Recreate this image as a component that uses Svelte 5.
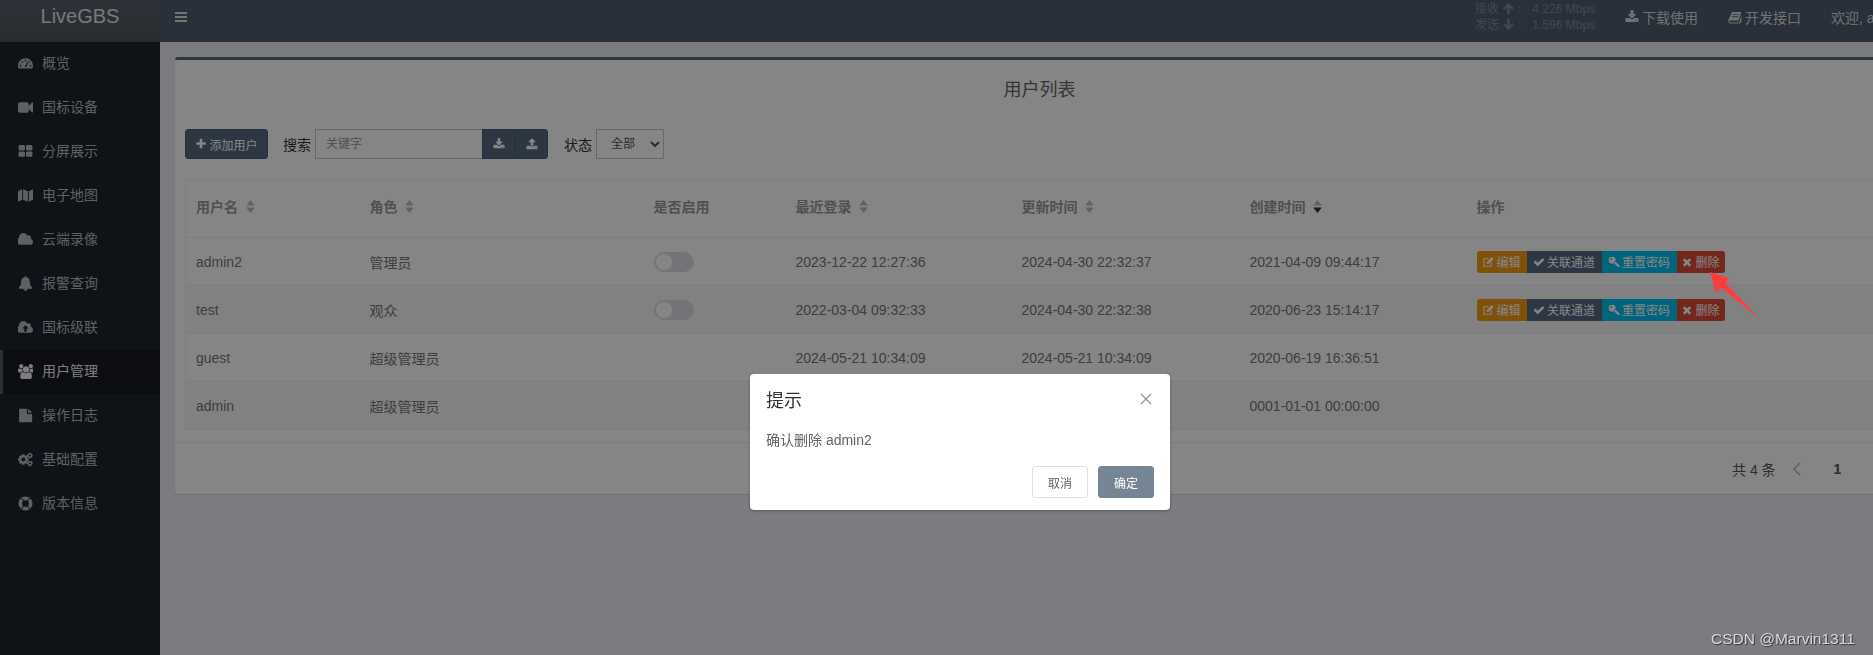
<script>
  const circle = (x, y, r) => `M${x - r} ${y}a${r} ${r} 0 1 0 ${2 * r} 0a${r} ${r} 0 1 0 ${-2 * r} 0Z`;

  // gear outline with a round hole, used for the settings icon
  function gear(cx, cy, r, teeth = 8) {
    const pts = [];
    const step = (Math.PI * 2) / teeth;
    for (let i = 0; i < teeth; i++) {
      const a = i * step;
      [[-0.32, 0.76], [-0.2, 1], [0.2, 1], [0.32, 0.76]].forEach(([o, k]) => {
        pts.push(`${(cx + Math.cos(a + o * step * 1.4) * r * k).toFixed(0)} ${(cy + Math.sin(a + o * step * 1.4) * r * k).toFixed(0)}`);
      });
    }
    return 'M' + pts.join('L') + 'Z' + circle(cx, cy, r * 0.36);
  }

  const cloud = 'M1792 1152q0 159-112.500 271.500t-271.500 112.500h-1088q-185 0-316.500-131.500t-131.500-316.500q0-132 71-241.500t187-163.500q-2-28-2-43 0-212 150-362t362-150q158 0 286.500 88t187.500 230q70-62 166-62 106 0 181 75t75 181q0 75-41 138 129 30 213 134.500t84 239.500z';

  const icons = {
    dashboard: 'M896 256C400 256 0 656 0 1152c0 138 30 248 90 348H1702c60-100 90-210 90-348C1792 656 1392 256 896 256Z' + circle(300, 1150, 100) + circle(480, 720, 100) + circle(896, 540, 100) + circle(1312, 720, 100) + circle(1492, 1150, 100) + 'M800 1300L1120 720 1200 760 1000 1300Z',
    video: 'M1792 352v1088q0 42-39 59-13 5-25 5-27 0-45-19l-403-403v166q0 119-84.500 203.500t-203.500 84.500h-704q-119 0-203.500-84.500t-84.500-203.500v-704q0-119 84.500-203.500t203.500-84.500h704q119 0 203.500 84.500t84.500 203.500v165l403-402q18-19 45-19 12 0 25 5 39 17 39 59z',
    grid: 'M832 1024v384q0 52-38 90t-90 38h-512q-52 0-90-38t-38-90v-384q0-52 38-90t90-38h512q52 0 90 38t38 90zm0-768v384q0 52-38 90t-90 38h-512q-52 0-90-38t-38-90v-384q0-52 38-90t90-38h512q52 0 90 38t38 90zm896 768v384q0 52-38 90t-90 38h-512q-52 0-90-38t-38-90v-384q0-52 38-90t90-38h512q52 0 90 38t38 90zm0-768v384q0 52-38 90t-90 38h-512q-52 0-90-38t-38-90v-384q0-52 38-90t90-38h512q52 0 90 38t38 90z',
    map: 'M0 380L500 150V1400L0 1640ZM610 150L1180 390V1640L610 1400ZM1290 390L1792 150V1400L1290 1640Z',
    cloud,
    bell: 'M912 1696q0-16-16-16-59 0-101.500-42.500t-42.500-101.500q0-16-16-16t-16 16q0 73 51.500 124.500t124.500 51.500q16 0 16-16zm816-288q0 52-38 90t-90 38h-448q0 106-75 181t-181 75-181-75-75-181h-448q-52 0-90-38t-38-90q50-42 91-88t85-119.500 74.500-158.500 50-206 19.500-260q0-152 117-282.500t307-158.500q-8-19-8-39 0-40 28-68t68-28 68 28 28 68q0 20-8 39 190 28 307 158.500t117 282.500q0 139 19.500 260t50 206 74.500 158.500 85 119.500 91 88z',
    cloudup: cloud + 'M896 640L1270 1010H1040V1400H752V1010H522Z',
    users: 'M593 896q-162 5-265 128h-134q-82 0-138-40.500t-56-118.500q0-353 124-353 6 0 43.500 21t97.500 42.500 119 21.500q67 0 133-23-5 37-5 66 0 139 81 256zm1071 637q0 120-73 189.500t-194 69.500h-874q-121 0-194-69.500t-73-189.500q0-53 3.500-103.500t14-109 26.500-108.500 43-97.500 62-81 85.500-53.500 111.500-20q10 0 43 21.500t73 48 107 48 135 21.500 135-21.500 107-48 73-48 43-21.500q61 0 111.500 20t85.500 53.500 62 81 43 97.500 26.500 108.500 14 109 3.500 103.500zm-1024-1277q0 106-75 181t-181 75-181-75-75-181 75-181 181-75 181 75 75 181zm704 384q0 159-112.500 271.500t-271.500 112.500-271.500-112.500-112.500-271.500 112.500-271.500 271.500-112.500 271.500 112.500 112.500 271.500zm576 225q0 78-56 118.500t-138 40.500h-134q-103-123-265-128 81-117 81-256 0-29-5-66 66 23 133 23 59 0 119-21.500t97.500-42.500 43.500-21q124 0 124 353zm-128-609q0 106-75 181t-181 75-181-75-75-181 75-181 181-75 181 75 75 181z',
    file: 'M1200 560V100q22 14 36 28l430 404q14 14 28 28zM1072 100V620q0 40 28 68t68 28h526V1620q0 40-28 68t-68 28H228q-40 0-68-28t-28-68V196q0-40 28-68t68-28Z',
    cogs: gear(640, 900, 640, 8) + gear(1430, 430, 340, 8) + gear(1430, 1370, 340, 8),
    ring: circle(896, 896, 840) + circle(896, 896, 400) + 'M300 230L390 150 700 540 620 610ZM1492 230L1402 150 1092 540 1172 610ZM300 1562L390 1642 700 1252 620 1182ZM1492 1562L1402 1642 1092 1252 1172 1182Z',
    plus: 'M1600 736v192q0 40-28 68t-68 28h-416v416q0 40-28 68t-68 28h-192q-40 0-68-28t-28-68v-416h-416q-40 0-68-28t-28-68v-192q0-40 28-68t68-28h416v-416q0-40 28-68t68-28h192q40 0 68 28t28 68v416h416q40 0 68 28t28 68z',
    download: 'M1344 1344q0-26-19-45t-45-19-45 19-19 45 19 45 45 19 45-19 19-45zm256 0q0-26-19-45t-45-19-45 19-19 45 19 45 45 19 45-19 19-45zm128-224v320q0 40-28 68t-68 28h-1472q-40 0-68-28t-28-68v-320q0-40 28-68t68-28h465l135 136q58 56 136 56t136-56l136-136h464q40 0 68 28t28 68zm-325-569q17 41-14 70l-448 448q-18 19-45 19t-45-19l-448-448q-31-29-14-70 17-39 59-39h256v-448q0-26 19-45t45-19h256q26 0 45 19t19 45v448h256q42 0 59 39z',
    upload: 'M1344 1472q0-26-19-45t-45-19-45 19-19 45 19 45 45 19 45-19 19-45zm256 0q0-26-19-45t-45-19-45 19-19 45 19 45 45 19 45-19 19-45zm128-224v320q0 40-28 68t-68 28h-1472q-40 0-68-28t-28-68v-320q0-40 28-68t68-28h427q21 56 70.500 92t110.500 36h256q61 0 110.500-36t70.500-92h427q40 0 68 28t28 68zm-325-648q-17 40-59 40h-256v448q0 26-19 45t-45 19h-256q-26 0-45-19t-19-45v-448h-256q-42 0-59-40-17-39 14-69l448-448q18-19 45-19t45 19l448 448q31 30 14 69z',
    book: 'M520 240H1700L1340 1330H300Q170 1330 170 1460T300 1600H1440L1720 640V1520L1500 1720H300Q60 1720 40 1460 30 1300 130 1130ZM640 500L600 620H1360L1400 500ZM540 800L500 920H1260L1300 800Z',
    edit: 'M200 340H1040L880 500H360V1440H1300V1010L1460 850V1600H200ZM1440 160L1720 440 1020 1140 660 1220 740 860Z',
    check: 'M1671 566q0 40-28 68l-724 724-136 136q-28 28-68 28t-68-28l-136-136-362-362q-28-28-28-68t28-68l136-136q28-28 68-28t68 28l294 295 656-657q28-28 68-28t68 28l136 136q28 28 28 68z',
    key: circle(620, 620, 520) + circle(480, 480, 140) + 'M900 900L1050 760 1720 1430V1650H1420V1480H1250V1310H1080Z',
    times: 'M1490 1322q0 40-28 68l-136 136q-28 28-68 28t-68-28l-294-294-294 294q-28 28-68 28t-68-28l-136-136q-28-28-28-68t28-68l294-294-294-294q-28-28-28-68t28-68l136-136q28-28 68-28t68 28l294 294 294-294q28-28 68-28t68 28l136 136q28 28 28 68t-28 68l-294 294 294 294q28 28 28 68z',
    up: 'M896 120L1640 860 1400 1080 1080 760V1680H712V760L392 1080 152 860Z',
    down: 'M896 1680L1640 940 1400 720 1080 1040V120H712V1040L392 720 152 940Z'
  };

  const menu = [
    ['dashboard', '概览'],
    ['video', '国标设备'],
    ['grid', '分屏展示'],
    ['map', '电子地图'],
    ['cloud', '云端录像'],
    ['bell', '报警查询'],
    ['cloudup', '国标级联'],
    ['users', '用户管理', true],
    ['file', '操作日志'],
    ['cogs', '基础配置'],
    ['ring', '版本信息']
  ];

  const columns = [
    { label: '用户名', sort: true },
    { label: '角色', sort: true },
    { label: '是否启用' },
    { label: '最近登录', sort: true },
    { label: '更新时间', sort: true },
    { label: '创建时间', sort: true, desc: true },
    { label: '操作' }
  ];

  const users = [
    { name: 'admin2', role: '管理员', login: '2023-12-22 12:27:36', updated: '2024-04-30 22:32:37', created: '2021-04-09 09:44:17', editable: true },
    { name: 'test', role: '观众', login: '2022-03-04 09:32:33', updated: '2024-04-30 22:32:38', created: '2020-06-23 15:14:17', editable: true },
    { name: 'guest', role: '超级管理员', login: '2024-05-21 10:34:09', updated: '2024-05-21 10:34:09', created: '2020-06-19 16:36:51' },
    { name: 'admin', role: '超级管理员', login: '', updated: '', created: '0001-01-01 00:00:00' }
  ];

  const actions = [
    ['edit', '编辑', 'orange'],
    ['check', '关联通道', 'dark'],
    ['key', '重置密码', 'blue'],
    ['times', '删除', 'red']
  ];
</script>

{#snippet icon(name, cls = '')}
  <svg class="icon {cls}" viewBox="0 0 1792 1792" aria-hidden="true"><path fill-rule="evenodd" d={icons[name]} /></svg>
{/snippet}

<div class="page">
  <aside class="sidebar">
    <div class="logo">LiveGBS</div>
    <nav>
      {#each menu as [ic, label, active]}
        <div class="nav-item" class:active>
          {@render icon(ic)}
          <span>{label}</span>
        </div>
      {/each}
    </nav>
  </aside>

  <div class="main">
    <header class="topbar">
      <svg class="burger" viewBox="0 0 14 12" aria-hidden="true"><path d="M1 1h12v2H1zM1 5h12v2H1zM1 9h12v2H1z" /></svg>
      <div class="stats">
        <div>接收 {@render icon('up')} : <b>4.226 Mbps</b></div>
        <div>发送 {@render icon('down')} : <b>1.596 Mbps</b></div>
      </div>
      <div class="link">{@render icon('download')}下载使用</div>
      <div class="link">{@render icon('book')}开发接口</div>
      <div class="link welcome">欢迎, admin</div>
    </header>

    <section class="content">
      <div class="card">
        <h3>用户列表</h3>
        <div class="toolbar">
          <button class="btn add">{@render icon('plus')}添加用户</button>
          <label for="kw">搜索</label>
          <div class="search">
            <input id="kw" placeholder="关键字" />
            <button class="btn square">{@render icon('download')}</button>
            <button class="btn square">{@render icon('upload')}</button>
          </div>
          <label for="state">状态</label>
          <select id="state"><option>全部</option></select>
        </div>

        <table>
          <colgroup>
            <col style="width:174px" /><col style="width:284px" /><col style="width:142px" /><col style="width:226px" /><col style="width:228px" /><col style="width:227px" /><col />
          </colgroup>
          <thead>
            <tr>
              {#each columns as col}
                <th>
                  {col.label}
                  {#if col.sort}
                    <svg class="sort" class:desc={col.desc} viewBox="0 0 10 14" aria-hidden="true"><path class="top" d="M5 1l4 5H1z" /><path class="bot" d="M5 13l4-5H1z" /></svg>
                  {/if}
                </th>
              {/each}
            </tr>
          </thead>
          <tbody>
            {#each users as u}
              <tr>
                <td>{u.name}</td>
                <td>{u.role}</td>
                <td>{#if u.editable}<span class="switch"><i></i></span>{/if}</td>
                <td>{u.login}</td>
                <td>{u.updated}</td>
                <td>{u.created}</td>
                <td>
                  {#if u.editable}
                    <div class="actions">
                      {#each actions as [ic, label, color]}
                        <button class="act {color}">{@render icon(ic)}{label}</button>
                      {/each}
                    </div>
                  {/if}
                </td>
              </tr>
            {/each}
          </tbody>
        </table>

        <footer class="pager">
          <span class="total">共 4 条</span>
          <svg class="chev" viewBox="0 0 10 14" aria-hidden="true"><path d="M8 1L2 7l6 6" /></svg>
          <b>1</b>
          <svg class="chev" viewBox="0 0 10 14" aria-hidden="true"><path d="M2 1l6 6-6 6" /></svg>
        </footer>
      </div>
    </section>
  </div>
</div>

<div class="overlay"></div>

<svg class="arrow" viewBox="0 0 60 60" aria-hidden="true"><path d="M2 2L21 8 17.500 13 52 49 13.500 18 8 23Z" /></svg>

<div class="modal" role="dialog">
  <div class="modal-head">
    <span>提示</span>
    <svg viewBox="0 0 12 12" aria-hidden="true"><path d="M1 1l10 10M11 1L1 11" /></svg>
  </div>
  <div class="modal-body">确认删除 admin2</div>
  <div class="modal-foot">
    <button class="m-btn">取消</button>
    <button class="m-btn ok">确定</button>
  </div>
</div>

<div class="mark">CSDN @Marvin1311</div>

<style>
  :global(body) {
    margin: 0;
    overflow: hidden;
    background: #ebedf3;
    font-family: "Liberation Sans", "Noto Sans CJK SC", sans-serif;
    font-size: 14px;
  }

  .page {
    display: flex;
    width: 1920px;
    height: 655px;
    overflow: hidden;
  }

  .icon {
    width: 14px;
    height: 14px;
    fill: currentColor;
    flex: none;
  }

  /* sidebar */
  .sidebar {
    width: 160px;
    flex: none;
    background: #1d232c;
    color: #b4b9be;
  }

  .logo {
    height: 42px;
    padding-bottom: 10px;
    box-sizing: border-box;
    display: flex;
    align-items: center;
    justify-content: center;
    background: linear-gradient(#59606c, #4b555e);
    color: #e4e6e8;
    font-size: 20px;
  }

  .nav-item {
    height: 44px;
    display: flex;
    align-items: center;
    gap: 9px;
    padding: 0 0 4px 18px;
    box-sizing: border-box;
  }

  .nav-item.active {
    background: #181c22;
    border-left: 3px solid #565c64;
    padding-left: 15px;
    color: #f0f0f0;
  }

  .nav-item .icon {
    width: 15px;
    height: 15px;
    margin-top: 2px;
  }

  /* top bar */
  .main {
    flex: 1;
    min-width: 0;
  }

  .topbar {
    height: 42px;
    display: flex;
    align-items: center;
    padding-bottom: 9px;
    box-sizing: border-box;
    background: #4f5c6e;
    color: #d8dade;
  }

  .burger {
    width: 14px;
    height: 12px;
    margin: 0 0 0 14px;
    fill: #e0e0e0;
  }

  .stats {
    margin-left: auto;
    margin-right: 30px;
    font-size: 12px;
    line-height: 16px;
    color: #7f8a98;
  }

  .stats div {
    display: flex;
    align-items: center;
    gap: 3px;
  }

  .stats b {
    font-weight: normal;
    margin-left: auto;
    padding-left: 8px;
  }

  .stats .icon {
    width: 13px;
    height: 13px;
  }

  .link {
    display: flex;
    align-items: center;
    gap: 3px;
    margin-right: 30px;
  }

  .link.welcome {
    margin-right: 15px;
  }

  /* card */
  .content {
    padding: 15px 16px 15px 15px;
  }

  .card {
    background: #fff;
    border-top: 3px solid #5d6879;
    border-radius: 3px;
    box-shadow: 0 1px 1px rgba(0, 0, 0, 0.1);
    height: 437px;
    box-sizing: border-box;
  }

  h3 {
    margin: 0;
    height: 60px;
    line-height: 60px;
    text-align: center;
    font-size: 18px;
    font-weight: normal;
    color: #666;
  }

  .toolbar {
    display: flex;
    align-items: center;
    height: 30px;
    margin: 9px 0 20px 10px;
    color: #333;
  }

  .btn {
    height: 30px;
    border: 1px solid #4e6074;
    border-radius: 3px;
    background: #566a80;
    color: #fff;
    font: inherit;
    font-size: 12px;
    display: flex;
    align-items: center;
    justify-content: center;
    padding: 0;
  }

  .add {
    width: 83px;
    gap: 2px;
    margin-right: 15px;
  }

  .add .icon {
    width: 12px;
    height: 12px;
  }

  .square {
    width: 33px;
    border-radius: 0;
  }

  .square .icon {
    width: 12px;
    height: 12px;
  }

  .square:last-child {
    border-radius: 0 3px 3px 0;
  }

  label {
    margin-right: 4px;
  }

  .search {
    display: flex;
    margin-right: 16px;
  }

  input {
    width: 167px;
    height: 30px;
    box-sizing: border-box;
    border: 1px solid #ccc;
    border-right: 0;
    padding: 0 10px;
    font: inherit;
    font-size: 12px;
    outline: none;
  }

  input::placeholder {
    color: #999;
  }

  select {
    width: 68px;
    height: 30px;
    padding-left: 10px;
    border: 1px solid #ccc;
    background: #fff;
    font: inherit;
    font-size: 12px;
    color: #555;
  }

  /* table */
  table {
    width: 1710px;
    margin-left: 10px;
    border-collapse: collapse;
    table-layout: fixed;
    border: 1px solid #f0f0f0;
    color: #777;
  }

  th {
    height: 58px;
    padding: 0 10px 5px;
    text-align: left;
    font-size: 14px;
    font-weight: bold;
    color: #999;
    box-sizing: border-box;
    border-bottom: 1px solid #f0f0f0;
  }

  td {
    height: 48px;
    padding: 0 10px;
    box-sizing: border-box;
    border-bottom: 1px solid #f0f0f0;
  }

  tbody tr:nth-child(even) {
    background: #f7f7f7;
  }

  .sort {
    width: 11px;
    height: 15px;
    margin-left: 3px;
    vertical-align: -2px;
    fill: #bbb;
  }

  .sort.desc .bot {
    fill: #333;
  }

  .switch {
    display: block;
    width: 40px;
    height: 20px;
    border-radius: 10px;
    background: #dcdfe6;
    position: relative;
  }

  .switch i {
    position: absolute;
    left: 2px;
    top: 2px;
    width: 16px;
    height: 16px;
    border-radius: 50%;
    background: #fff;
  }

  .actions {
    display: flex;
    height: 22px;
  }

  .act {
    height: 22px;
    border: 1px solid transparent;
    padding: 0;
    color: #fff;
    font: inherit;
    font-size: 12px;
    display: flex;
    align-items: center;
    justify-content: center;
    gap: 2px;
    width: 75px;
    box-sizing: border-box;
  }

  .act .icon {
    width: 12px;
    height: 12px;
  }

  .orange {
    width: 50px;
    background: #f39c12;
    border-radius: 3px 0 0 3px;
  }

  .dark {
    background: #566a80;
  }

  .blue {
    background: #00c0ef;
  }

  .red {
    width: 48px;
    background: #dd4b39;
    border-radius: 0 3px 3px 0;
  }

  .pager {
    display: flex;
    align-items: center;
    margin-top: 12px;
    height: 52px;
    border-top: 1px solid #f0f0f0;
    box-sizing: border-box;
    color: #555;
  }

  .total {
    margin-left: 1557px;
    font-size: 14px;
    white-space: nowrap;
  }

  .chev {
    width: 10px;
    height: 14px;
    margin-left: 16px;
    fill: none;
    stroke: #bbb;
    stroke-width: 1.6;
  }

  .pager b {
    margin-left: 32px;
    margin-right: 30px;
  }

  /* dialog on top */
  .overlay {
    position: fixed;
    inset: 0;
    background: rgba(0, 0, 0, 0.48);
  }

  .arrow {
    position: fixed;
    left: 1708px;
    top: 270px;
    width: 60px;
    height: 60px;
    fill: #ff3d3d;
  }

  .modal {
    position: fixed;
    left: 750px;
    top: 374px;
    width: 420px;
    height: 136px;
    background: #fff;
    border-radius: 4px;
    box-shadow: 0 1px 3px rgba(0, 0, 0, 0.3);
  }

  .modal-head {
    display: flex;
    align-items: center;
    justify-content: space-between;
    padding: 12px 18px 0 16px;
    height: 26px;
    font-size: 18px;
    color: #303133;
  }

  .modal-head svg {
    width: 12px;
    height: 12px;
    fill: none;
    stroke: #909399;
    stroke-width: 1.2;
  }

  .modal-body {
    padding: 18px 16px 0;
    line-height: 20px;
    color: #606266;
  }

  .modal-foot {
    display: flex;
    justify-content: flex-end;
    gap: 10px;
    padding: 16px 16px 0;
  }

  .m-btn {
    width: 56px;
    height: 32px;
    border: 1px solid #dcdfe6;
    border-radius: 3px;
    background: #fff;
    color: #606266;
    font: inherit;
    font-size: 12px;
    padding: 0;
  }

  .m-btn.ok {
    background: #768594;
    border-color: #768594;
    color: #fff;
  }

  .mark {
    position: fixed;
    left: 1711px;
    top: 630px;
    font-size: 15.500px;
    line-height: 18px;
    color: #d8d8d8;
    text-shadow: 1px 1px 1px #333;
  }
</style>
